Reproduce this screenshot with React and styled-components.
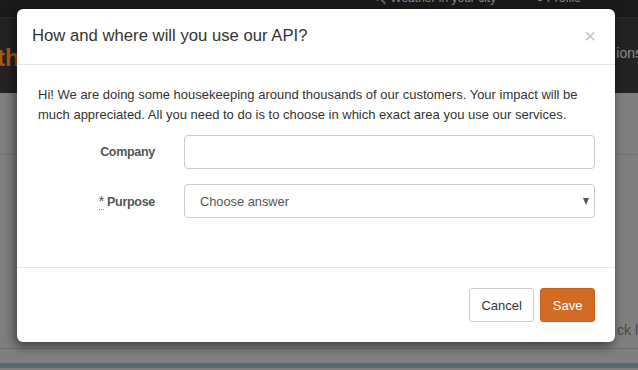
import React from "react";
import styled, { createGlobalStyle } from "styled-components";

const Global = createGlobalStyle`
  html, body { margin: 0; padding: 0; }
  body {
    width: 638px; height: 370px; overflow: hidden;
    font-family: "Liberation Sans", Arial, sans-serif;
    background: #7f7f7f;
  }
  * { box-sizing: border-box; }
`;

const Page = styled.div`
  position: relative;
  width: 638px;
  height: 370px;
  display: flex;
  flex-direction: column;
  overflow: hidden;
`;

const TopBar = styled.div`
  height: 17px;
  background: #1a1a1a;
  display: flex;
  gap: 40px;
  padding-left: 372px;
  overflow: hidden;
`;

const TopText = styled.span`
  font-size: 12px;
  color: #8a8a8a;
  margin-top: -9px;
  line-height: 14px;
`;

const Header = styled.div`
  height: 76px;
  background: #232323;
  border-top: 1px solid #2a2a2a;
  display: flex;
  justify-content: space-between;
  align-items: center;
`;

const Brand = styled.span`
  font-size: 24px;
  font-weight: 700;
  color: #a9571a;
  margin-left: -3px;
  margin-top: 4px;
`;

const NavText = styled.span`
  font-size: 14px;
  color: #8c8c8c;
  margin-right: -4px;
  margin-top: -6px;
`;

const Content = styled.div`
  flex: 1;
  background: #7f7f7f;
  display: flex;
  flex-direction: column;
`;

const Band = styled.div`
  height: ${(p) => p.$h}px;
  border-bottom: 1px solid ${(p) => p.$line || "transparent"};
  display: flex;
  justify-content: flex-end;
  align-items: flex-end;
`;

const SideText = styled.span`
  font-size: 14px;
  color: #4a4a4a;
  margin-right: 0;
  margin-bottom: 10px;
`;

const Strip = styled.div`
  height: 5px;
  background: #5d6970;
`;

const Modal = styled.div`
  position: absolute;
  left: 17px;
  top: 9px;
  width: 598px;
  height: 333px;
  background: #fff;
  border-radius: 6px;
  box-shadow: -2px 4px 12px rgba(0, 0, 0, 0.55);
  display: flex;
  flex-direction: column;
`;

const ModalHeader = styled.div`
  height: 56px;
  border-bottom: 1px solid #e5e5e5;
  display: flex;
  align-items: center;
  justify-content: space-between;
  padding: 0 15px 2px 15px;
`;

const Title = styled.h4`
  margin: 0;
  font-size: 16.7px;
  font-weight: 400;
  color: #333;
`;

const Close = styled.span`
  font-size: 20px;
  color: #c4c4c4;
  line-height: 1;
  margin-right: 4px;
`;

const ModalBody = styled.div`
  flex: 1;
  padding: 20px 20px 0 21px;
  border-bottom: 1px solid #e5e5e5;
`;

const Intro = styled.p`
  margin: 0 0 10px;
  font-size: 13px;
  line-height: 20px;
  color: #333;
`;

const Form = styled.div`
  display: grid;
  grid-template-columns: 117px 411px;
  column-gap: 29px;
  row-gap: 15px;
  align-items: center;
`;

const Label = styled.label`
  text-align: right;
  font-size: 12.5px;
  font-weight: 700;
  color: #555;
  letter-spacing: -0.3px;
`;

const Req = styled.abbr`
  text-decoration: none;
  border-bottom: 1px dotted #999;
  font-weight: 400;
  font-size: 15px;
  line-height: 1;
  margin-right: 3px;
`;

const Field = styled.div`
  position: relative;
  height: 34px;
  border: 1px solid #ccc;
  border-radius: 4px;
  background: #fff;
  display: flex;
  align-items: center;
  padding: 0 15px;
  font-size: 12.8px;
  color: #555;
`;

const Caret = styled.span`
  position: absolute;
  right: 5px;
  top: 13px;
  width: 0;
  height: 0;
  border-left: 3.5px solid transparent;
  border-right: 3.5px solid transparent;
  border-top: 7px solid #555;
`;

const Footer = styled.div`
  height: 74px;
  padding: 20px;
  display: flex;
  justify-content: flex-end;
  gap: 6px;
`;

const Button = styled.button`
  height: 34px;
  padding: 0 11.5px;
  border-radius: 3px;
  font-family: inherit;
  font-size: 13px;
  border: 1px solid ${(p) => (p.$primary ? "#c6621e" : "#ccc")};
  background: ${(p) => (p.$primary ? "#d26b24" : "#fff")};
  color: ${(p) => (p.$primary ? "#fff" : "#333")};
`;

export default function App() {
  return (
    <>
      <Global />
      <Page>
        <TopBar>
          <TopText>🔍 Weather in your city</TopText>
          <TopText>● Profile</TopText>
        </TopBar>
        <Header>
          <Brand>th</Brand>
          <NavText>ions</NavText>
        </Header>
        <Content>
          <Band $h={62} $line="#737373" />
          <Band $h={194} $line="#6e6e6e">
            <SideText>ck l</SideText>
          </Band>
          <Band $h={14} />
          <Strip />
        </Content>
        <Modal>
          <ModalHeader>
            <Title>How and where will you use our API?</Title>
            <Close>×</Close>
          </ModalHeader>
          <ModalBody>
            <Intro>
              Hi! We are doing some housekeeping around thousands of our customers. Your impact will be
              much appreciated. All you need to do is to choose in which exact area you use our services.
            </Intro>
            <Form>
              <Label>Company</Label>
              <Field />
              <Label>
                <Req title="required">*</Req>Purpose
              </Label>
              <Field>
                Choose answer
                <Caret />
              </Field>
            </Form>
          </ModalBody>
          <Footer>
            <Button>Cancel</Button>
            <Button $primary>Save</Button>
          </Footer>
        </Modal>
      </Page>
    </>
  );
}
